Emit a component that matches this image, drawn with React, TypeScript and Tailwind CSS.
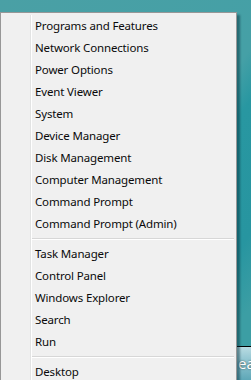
import React from "react";

const groups: string[][] = [
  [
    "Programs and Features",
    "Network Connections",
    "Power Options",
    "Event Viewer",
    "System",
    "Device Manager",
    "Disk Management",
    "Computer Management",
    "Command Prompt",
    "Command Prompt (Admin)",
  ],
  ["Task Manager", "Control Panel", "Windows Explorer", "Search", "Run"],
  ["Desktop"],
];

export default function App() {
  return (
    <div
      className="relative w-[251px] h-[380px] overflow-hidden flex flex-col bg-[linear-gradient(125deg,#4aa0a5_0%,#45a0a6_55%,#2897a1_62%,#2795a0_80%,#3c9ea4_90%)]"
      style={{ fontFamily: '"Noto Sans", "Open Sans", sans-serif' }}
    >
      <div className="flex-1" />
      <div className="h-[34px] border-t border-black bg-[linear-gradient(180deg,#b9dbe2_0%,#8cc3cf_45%,#5ea7b7_100%)] flex items-center pl-[238px] text-[15px] text-white [text-shadow:0_0_2px_rgba(0,0,0,0.6)] whitespace-nowrap">
        ear
      </div>

      <div className="absolute left-0 top-[12px] w-[237px] h-[400px] border border-[#979797] bg-[#f0f0f0] shadow-[3px_3px_2px_rgba(0,40,50,0.45)] pt-[2px] flex">
        <div className="w-[29px] shrink-0" />
        <div className="w-px bg-[#e2e3e3] shrink-0" />
        <div className="w-px bg-white shrink-0" />
        <div className="flex-1 flex flex-col pr-[2px]">
          {groups.map((g, gi) => (
            <React.Fragment key={gi}>
              {gi > 0 && (
                <div className="my-[3px] h-[2px] border-t border-[#d7d7d7] border-b border-b-white" />
              )}
              {g.map((t) => (
                <div
                  key={t}
                  className="h-[22px] leading-[22px] pl-[3px] text-[11.5px] tracking-[-0.15px] text-[#0a0a0a] whitespace-nowrap"
                >
                  {t}
                </div>
              ))}
            </React.Fragment>
          ))}
        </div>
      </div>
    </div>
  );
}
